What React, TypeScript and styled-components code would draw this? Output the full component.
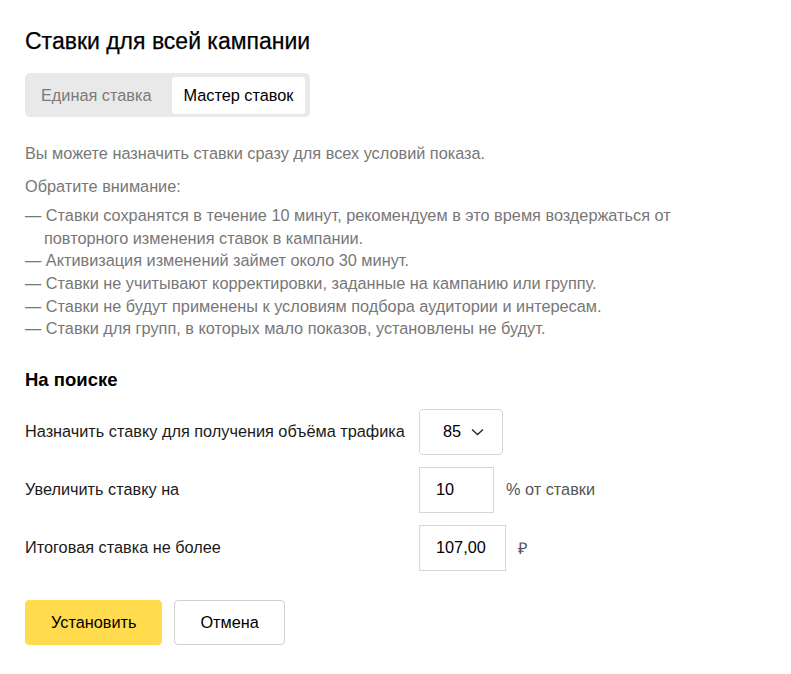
import styled, { createGlobalStyle } from "styled-components";

const GlobalStyle = createGlobalStyle`
  body {
    margin: 0;
    background: #fff;
    font-family: "Liberation Sans", Arial, sans-serif;
    color: #000;
  }
`;

const StPage = styled.div`
  width: 791px;
  padding: 28px 25px 28px;
  box-sizing: border-box;
`;

const StTitle = styled.h1`
  margin: 0;
  font-size: 23px;
  line-height: 26px;
  font-weight: 500;
  color: #000;
  -webkit-text-stroke: 0.25px #000;
`;

const StTabs = styled.div`
  display: inline-flex;
  gap: 8px;
  margin-top: 19px;
  padding: 4px 5px 3px 4px;
  background: #e9e9e9;
  border-radius: 5px;
`;

const StTab = styled.button<{ $active?: boolean }>`
  height: 37px;
  padding: 0 12px;
  border: none;
  border-radius: 3px;
  font-family: inherit;
  font-size: 16.3px;
  background: ${({ $active }) => ($active ? "#fff" : "transparent")};
  color: ${({ $active }) => ($active ? "#000" : "#7a7a7a")};
`;

const StNote = styled.div`
  margin-top: 25px;
  color: #777;
  font-size: 16.3px;
  line-height: 22.6px;
`;

const StParagraph = styled.p`
  margin: 0 0 10px;
`;

const StList = styled.ul`
  margin: 7px 0 0;
  padding: 0;
  list-style: none;
  max-width: 700px;
`;

const StItem = styled.li`
  padding-left: 19px;
  text-indent: -19px;
`;

const StSectionTitle = styled.h2`
  margin: 29px 0 0;
  font-size: 18.5px;
  line-height: 22px;
  font-weight: 700;
`;

const StForm = styled.div`
  display: grid;
  grid-template-columns: 394px auto;
  row-gap: 12px;
  margin-top: 18px;
  align-items: center;
`;

const StLabel = styled.div`
  font-size: 16.3px;
  color: #1a1a1a;
`;

const StControl = styled.div`
  display: flex;
  align-items: center;
  gap: 12px;
  font-size: 16.3px;
  color: #555;
`;

const StSelect = styled.button`
  display: flex;
  align-items: center;
  gap: 10px;
  width: 84px;
  height: 46px;
  padding: 0 0 0 23px;
  box-sizing: border-box;
  background: #fff;
  border: 1px solid #d7d7d7;
  border-radius: 4px;
  font-family: inherit;
  font-size: 16.3px;
  color: #000;
`;

const StInput = styled.input<{ $width: number }>`
  width: ${({ $width }) => $width}px;
  height: 46px;
  box-sizing: border-box;
  padding: 0 0 0 16px;
  border: 1px solid #d7d7d7;
  font-family: inherit;
  font-size: 16.3px;
  color: #000;
  outline: none;
`;

const StActions = styled.div`
  display: flex;
  gap: 12px;
  margin-top: 29px;
`;

const StButton = styled.button<{ $primary?: boolean }>`
  height: 45px;
  padding: 0 25px;
  border-radius: 4px;
  font-family: inherit;
  font-size: 16.3px;
  color: #000;
  background: ${({ $primary }) => ($primary ? "#ffdb4d" : "#fff")};
  border: 1px solid ${({ $primary }) => ($primary ? "#ffdb4d" : "#d0d0d0")};
`;

const notes = [
  "— Ставки сохранятся в течение 10 минут, рекомендуем в это время воздержаться от повторного изменения ставок в кампании.",
  "— Активизация изменений займет около 30 минут.",
  "— Ставки не учитывают корректировки, заданные на кампанию или группу.",
  "— Ставки не будут применены к условиям подбора аудитории и интересам.",
  "— Ставки для групп, в которых мало показов, установлены не будут.",
];

const Chevron = () => (
  <svg width="13" height="8" viewBox="0 0 13 8" fill="none">
    <path d="M1 1.5l5.5 5 5.5-5" stroke="#222" strokeWidth="1.3" />
  </svg>
);

const App = () => {
  return (
    <>
      <GlobalStyle />
      <StPage>
        <StTitle>Ставки для всей кампании</StTitle>
        <StTabs>
          <StTab>Единая ставка</StTab>
          <StTab $active>Мастер ставок</StTab>
        </StTabs>
        <StNote>
          <StParagraph>Вы можете назначить ставки сразу для всех условий показа.</StParagraph>
          <div>Обратите внимание:</div>
          <StList>
            {notes.map((note, index) => (
              <StItem key={index}>{note}</StItem>
            ))}
          </StList>
        </StNote>
        <StSectionTitle>На поиске</StSectionTitle>
        <StForm>
          <StLabel>Назначить ставку для получения объёма трафика</StLabel>
          <StControl>
            <StSelect>
              85 <Chevron />
            </StSelect>
          </StControl>
          <StLabel>Увеличить ставку на</StLabel>
          <StControl>
            <StInput $width={75} defaultValue="10" />
            <span>% от ставки</span>
          </StControl>
          <StLabel>Итоговая ставка не более</StLabel>
          <StControl>
            <StInput $width={87} defaultValue="107,00" />
            <span>₽</span>
          </StControl>
        </StForm>
        <StActions>
          <StButton $primary>Установить</StButton>
          <StButton>Отмена</StButton>
        </StActions>
      </StPage>
    </>
  );
};

export default App;
